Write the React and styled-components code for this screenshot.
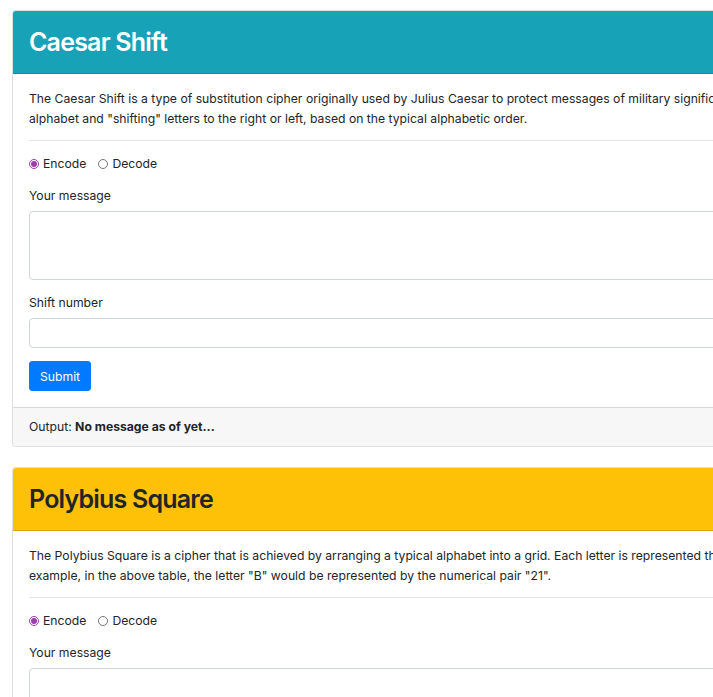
import React, { useState } from "react";
import styled, { createGlobalStyle } from "styled-components";

const GlobalStyle = createGlobalStyle`
  body {
    margin: 0;
    overflow: hidden;
    font-family: Inter, "Liberation Sans", Arial, sans-serif;
    color: #212529;
    background: #fff;
  }
`;

const ciphers = [
  {
    id: "caesar",
    title: "Caesar Shift",
    variant: "info",
    lines: [
      "The Caesar Shift is a type of substitution cipher originally used by Julius Caesar to protect messages of military significance. It works by taking the",
      'alphabet and "shifting" letters to the right or left, based on the typical alphabetic order.',
    ],
    extra: "Shift number",
  },
  {
    id: "polybius",
    title: "Polybius Square",
    variant: "warning",
    lines: [
      "The Polybius Square is a cipher that is achieved by arranging a typical alphabet into a grid. Each letter is represented through its coordinates in the grid. For",
      'example, in the above table, the letter "B" would be represented by the numerical pair "21".',
    ],
  },
];

const CipherCard = (props) => {
  const [mode, setMode] = useState("encode");

  return (
    <Card>
      <Header variant={props.variant}>
        <Title>{props.title}</Title>
      </Header>
      <Body>
        <Intro>
          {props.lines.map((l) => (
            <Line key={l}>{l}</Line>
          ))}
        </Intro>
        <Rule />
        <RadioRow>
          <RadioLabel>
            <input
              type="radio"
              name={props.id}
              checked={mode === "encode"}
              onChange={() => setMode("encode")}
            />
            Encode
          </RadioLabel>
          <RadioLabel>
            <input
              type="radio"
              name={props.id}
              checked={mode === "decode"}
              onChange={() => setMode("decode")}
            />
            Decode
          </RadioLabel>
        </RadioRow>
        <Field>
          <Label>Your message</Label>
          <TextArea rows={3} />
        </Field>
        {props.extra && (
          <Field>
            <Label>{props.extra}</Label>
            <Input type="number" />
          </Field>
        )}
        <Button>Submit</Button>
      </Body>
      <Footer>
        Output: <b>No message as of yet...</b>
      </Footer>
    </Card>
  );
};

const App = () => {
  return (
    <Page>
      <GlobalStyle />
      {ciphers.map((c) => (
        <CipherCard key={c.id} {...c} />
      ))}
    </Page>
  );
};

export default App;

const Page = styled.div`
  padding: 10px 0 0 12px;
  display: flex;
  flex-direction: column;
  gap: 20px;
`;

const Card = styled.div`
  width: 1000px;
  border: 1px solid rgba(0, 0, 0, 0.125);
  border-radius: 4px;
  background: #fff;
  overflow: hidden;
`;

const Header = styled.div`
  padding: 0 16px;
  height: 62px;
  display: flex;
  align-items: center;
  background: ${(p) => (p.variant === "warning" ? "#ffc107" : "#17a2b8")};
  color: ${(p) => (p.variant === "warning" ? "#212529" : "#fff")};
  border-bottom: 1px solid rgba(0, 0, 0, 0.125);
`;

const Title = styled.h2`
  margin: 0;
  font-size: 25px;
  font-weight: 600;
  letter-spacing: -0.8px;
`;

const Body = styled.div`
  padding: 15px 16px 16px;
  font-size: 12.2px;
  line-height: 16px;
`;

const Intro = styled.p`
  margin: 0;
  line-height: 20px;
`;

const Line = styled.span`
  display: block;
  white-space: nowrap;
`;

const Rule = styled.hr`
  margin: 11px 0 15px;
  border: 0;
  border-top: 1px solid rgba(0, 0, 0, 0.1);
`;

const RadioRow = styled.div`
  display: flex;
  gap: 12px;
  margin-bottom: 3px;
`;

const RadioLabel = styled.label`
  display: flex;
  align-items: center;
  gap: 4px;
  input {
    margin: 0;
    width: 10px;
    height: 10px;
    accent-color: #9d3dac;
  }
`;

const Field = styled.div`
  margin-top: 16px;
  display: flex;
  flex-direction: column;
  gap: 7px;
  & + & {
    margin-top: 15px;
  }
`;

const Label = styled.label``;

const TextArea = styled.textarea`
  height: 69px;
  box-sizing: border-box;
  border: 1px solid #ced4da;
  border-radius: 4px;
  resize: none;
`;

const Input = styled.input`
  height: 30px;
  box-sizing: border-box;
  border: 1px solid #ced4da;
  border-radius: 4px;
`;

const Button = styled.button`
  margin-top: 13px;
  padding: 0 10px;
  width: 62px;
  height: 30px;
  background: #007bff;
  border: 1px solid #007bff;
  border-radius: 3px;
  color: #fff;
  font-family: inherit;
  font-size: 12.2px;
`;

const Footer = styled.div`
  padding: 11px 16px 11px;
  font-size: 12.2px;
  line-height: 16px;
  background: #f7f7f7;
  border-top: 1px solid rgba(0, 0, 0, 0.125);
`;
